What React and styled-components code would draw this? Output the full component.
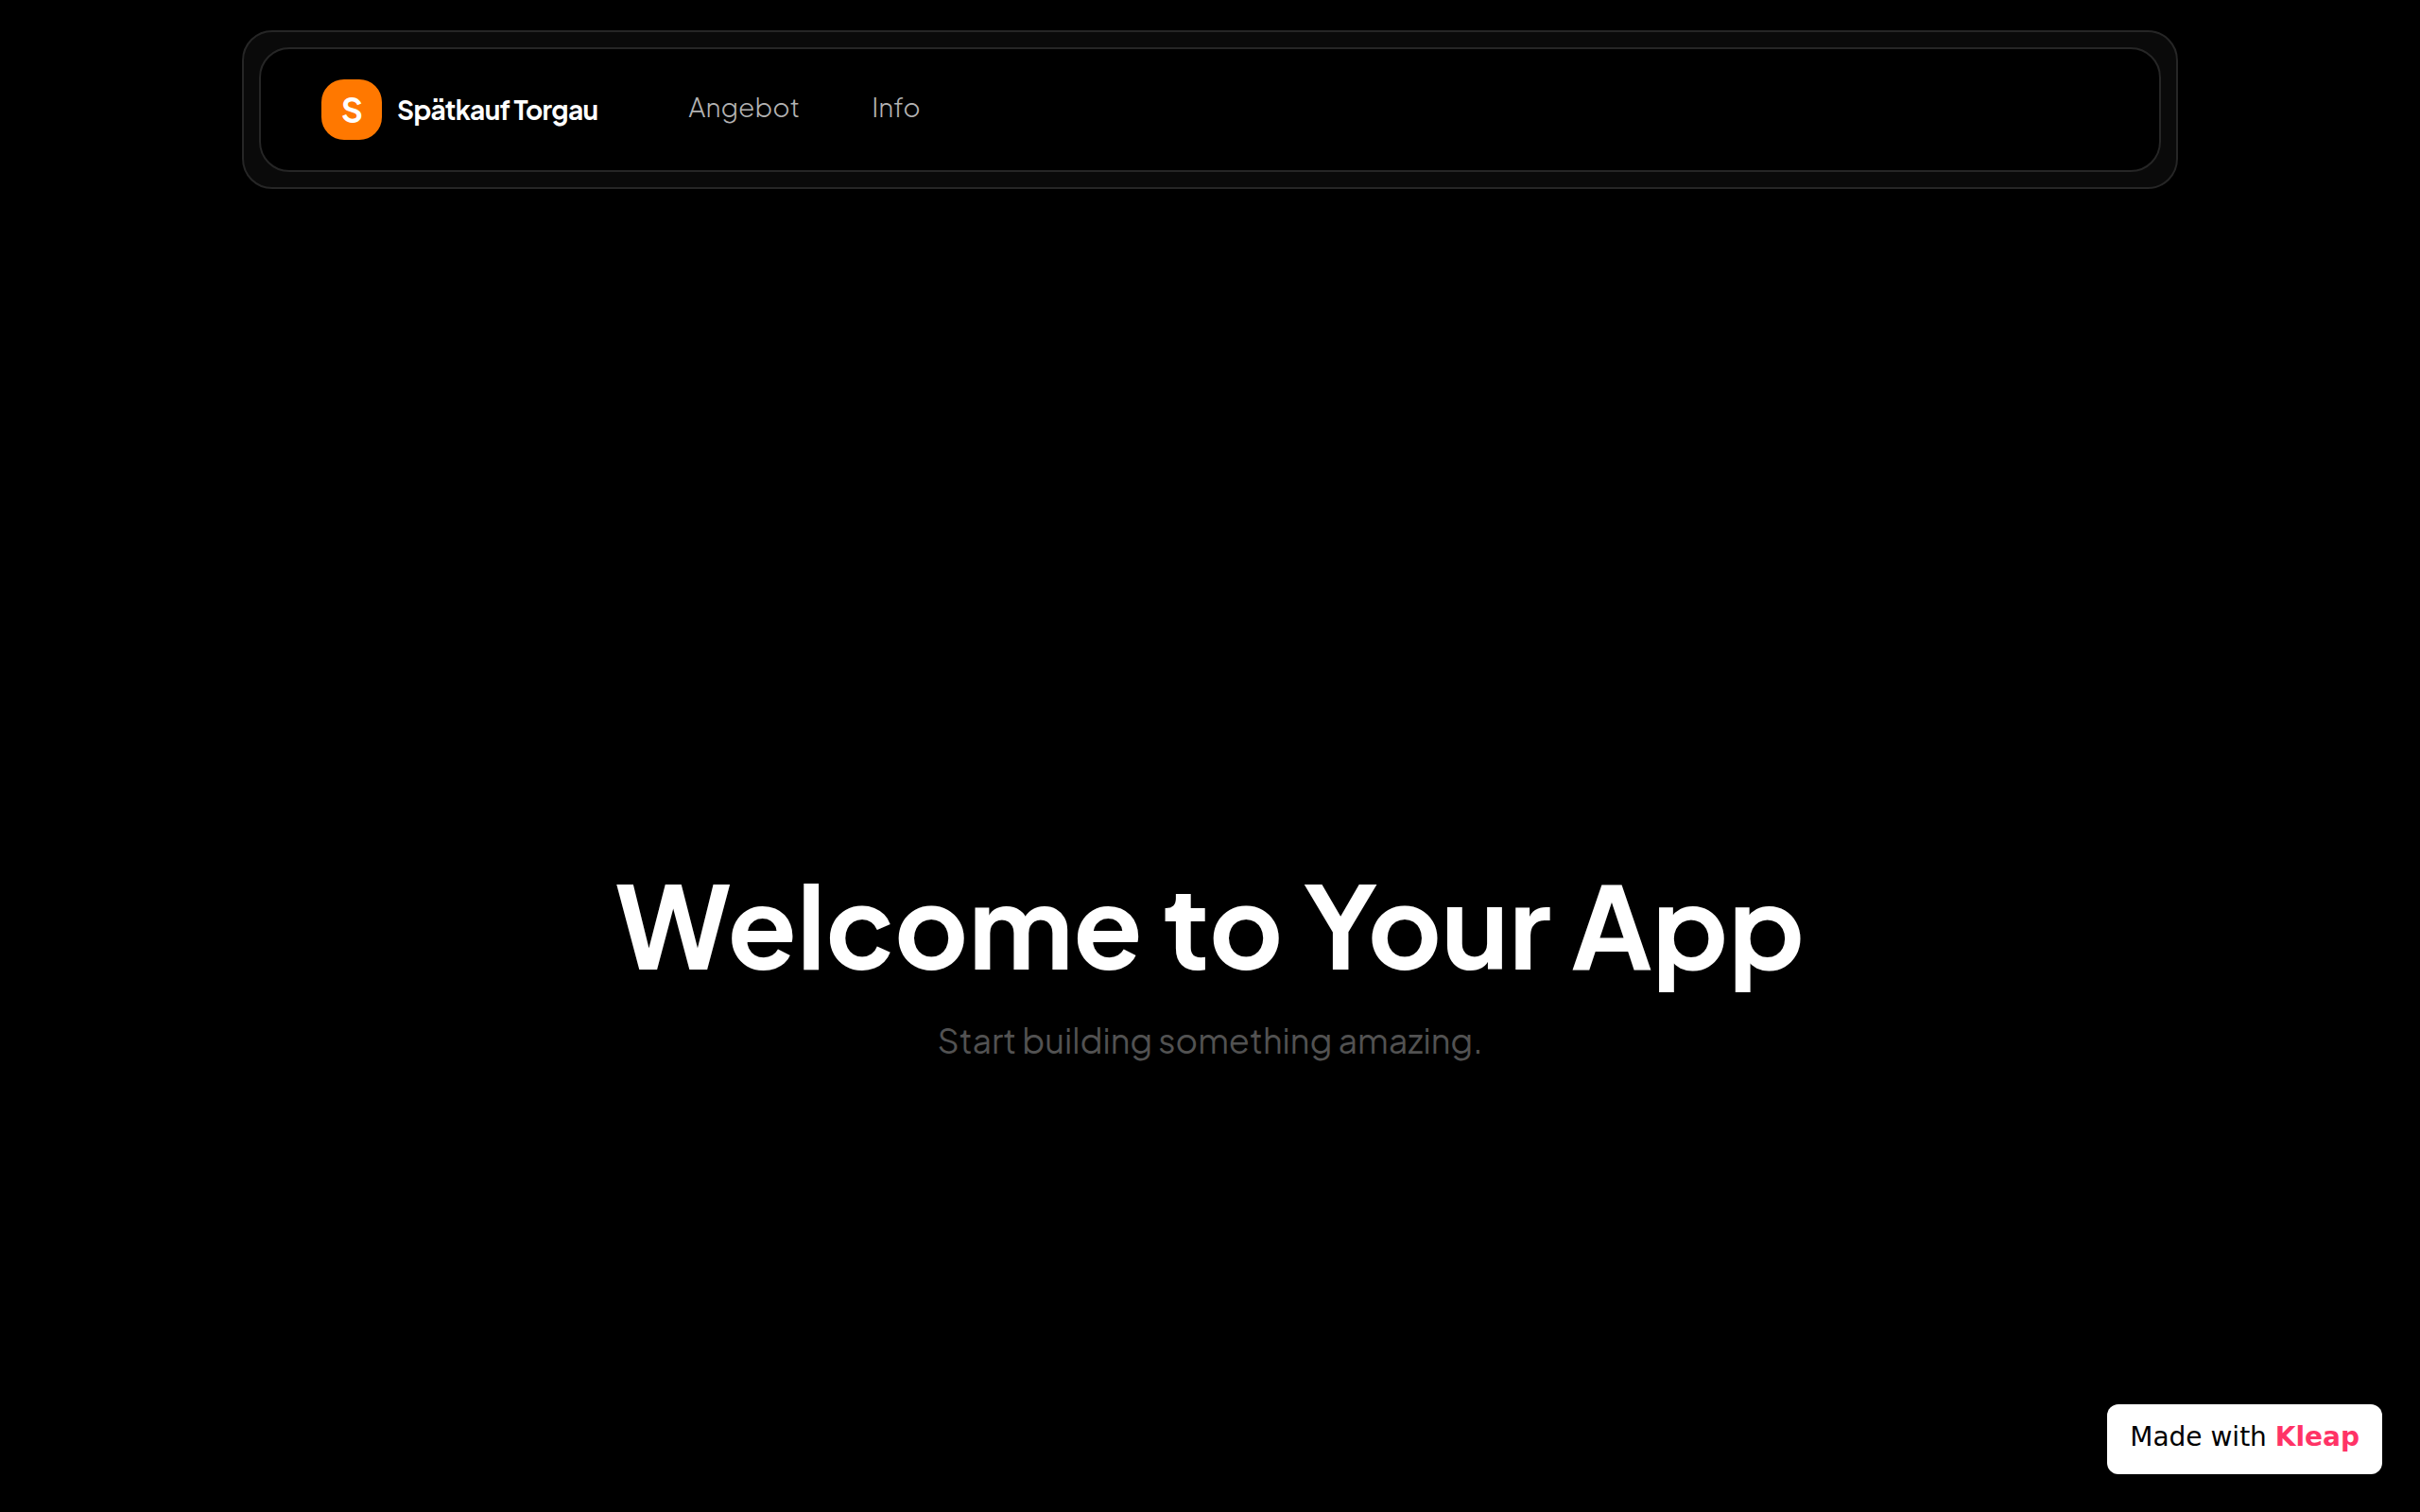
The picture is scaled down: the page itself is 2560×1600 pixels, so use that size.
import React from "react";
import styled, { createGlobalStyle } from "styled-components";

const GlobalStyle = createGlobalStyle`
  *, *::before, *::after { box-sizing: border-box; }
  body {
    margin: 0;
    background: #000;
    color: #fff;
    font-family: "Plus Jakarta Sans", Inter, "Liberation Sans", sans-serif;
    -webkit-font-smoothing: antialiased;
  }
`;

const Page = styled.div`
  display: flex;
  flex-direction: column;
  min-height: 100vh;
`;

const Header = styled.header`
  width: 80%;
  margin: 32px auto 0;
  padding: 16px;
  border: 2px solid #262626;
  border-radius: 32px;
  background: #0a0a0a;
`;

const Bar = styled.div`
  display: flex;
  align-items: center;
  padding: 32px 64px;
  border: 2px solid #262626;
  border-radius: 32px;
  background: #000;
`;

const Brand = styled.a`
  display: flex;
  align-items: center;
  gap: 16px;
  color: #fff;
  font-size: 28px;
  line-height: 40px;
  font-weight: 700;
  letter-spacing: -0.025em;
  text-decoration: none;
`;

const Mark = styled.span`
  display: grid;
  place-items: center;
  width: 64px;
  height: 64px;
  border-radius: 24px;
  background: #ff7800;
  font-size: 36px;
`;

const Nav = styled.nav`
  display: flex;
  gap: 76px;
  margin-left: 96px;
  padding-bottom: 6px;
`;

const NavLink = styled.a`
  color: #b3b3b3;
  font-size: 28px;
  line-height: 40px;
  font-weight: 300;
  text-decoration: none;
`;

const Hero = styled.main`
  display: flex;
  flex: 1;
  flex-direction: column;
  align-items: center;
  justify-content: center;
  gap: 32px;
  padding-top: 242px;
  text-align: center;
`;

const Title = styled.h1`
  margin: 0;
  font-size: 120px;
  line-height: 128px;
  font-weight: 700;
`;

const Subtitle = styled.p`
  margin: 0;
  color: #525252;
  font-size: 36px;
  line-height: 56px;
  font-weight: 400;
`;

const Badge = styled.a`
  position: fixed;
  right: 40px;
  bottom: 40px;
  padding: 18px 24px 22px;
  border-radius: 12px;
  background: #fff;
  color: #000;
  font-family: "DejaVu Sans", sans-serif;
  font-size: 28px;
  line-height: 34px;
  text-decoration: none;
`;

const BadgeName = styled.strong`
  color: #ff3366;
  font-weight: 700;
`;

const links = [
  { label: "Angebot", href: "#angebot" },
  { label: "Info", href: "#info" },
];

export default function App() {
  return (
    <Page>
      <GlobalStyle />
      <Header>
        <Bar>
          <Brand href="#">
            <Mark>S</Mark>
            Spätkauf Torgau
          </Brand>
          <Nav>
            {links.map((link) => (
              <NavLink key={link.href} href={link.href}>
                {link.label}
              </NavLink>
            ))}
          </Nav>
        </Bar>
      </Header>
      <Hero>
        <Title>Welcome to Your App</Title>
        <Subtitle>Start building something amazing.</Subtitle>
      </Hero>
      <Badge href="#kleap">
        Made with <BadgeName>Kleap</BadgeName>
      </Badge>
    </Page>
  );
}
